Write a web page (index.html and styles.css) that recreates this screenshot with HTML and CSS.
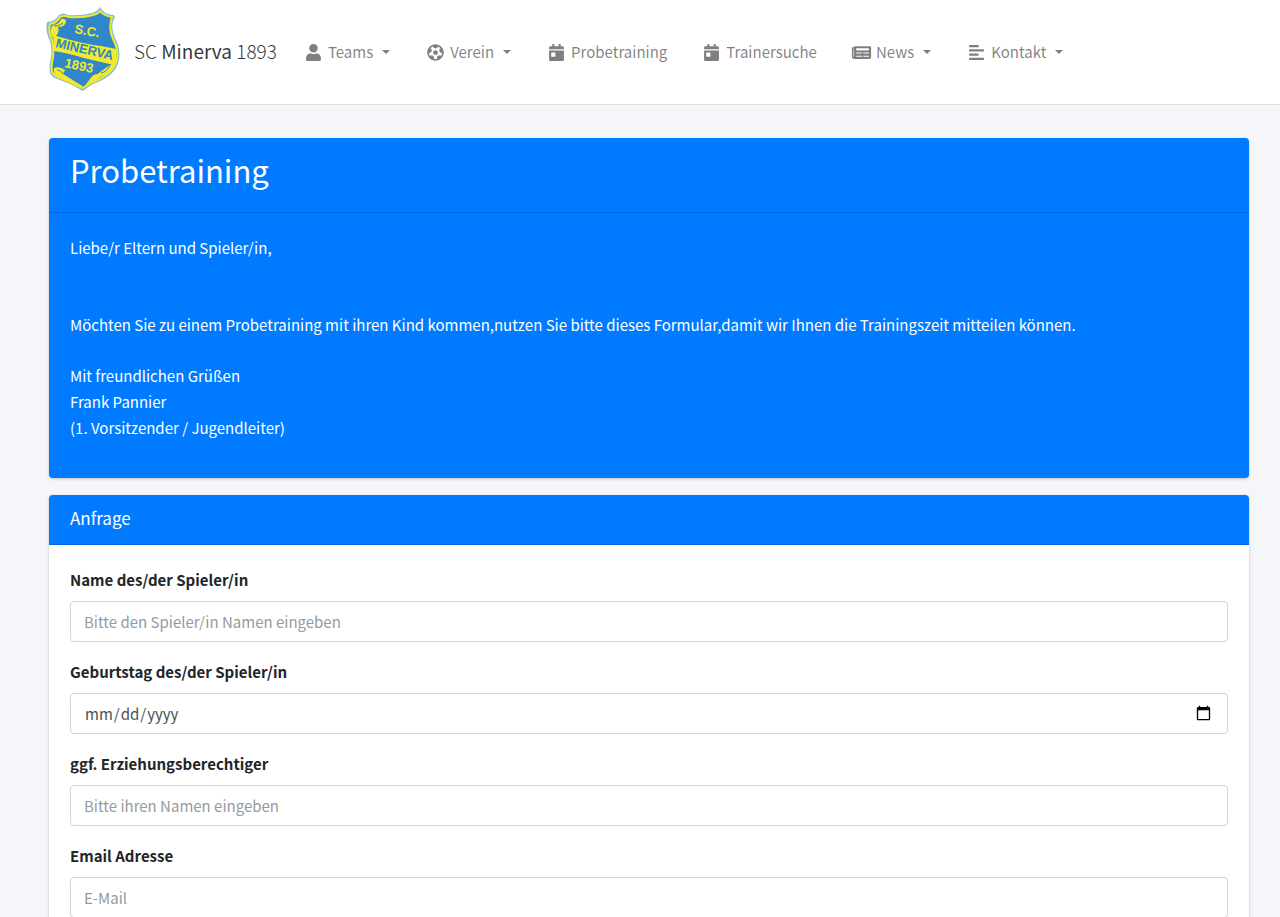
FILE: index.html
```html
<!DOCTYPE html>
<html lang="de">
<head>
    <meta charset="UTF-8">
    <meta name="viewport" content="width=device-width, initial-scale=1.0">
    <title>Probetraining - SC Minerva 1893</title>
    <link rel="stylesheet" href="styles.css">
</head>
<body>

    <!-- Navigation -->
    <header class="navbar">
        <a href="#" class="brand">
            <svg class="brand-logo" viewBox="0 0 76 86" aria-hidden="true">
                <path class="logo-edge" d="M1 16 Q9 16 13 9 Q17 6 22 9 Q35 10 46 7 Q52 5 54 1 Q57 8 67 9 Q70 10 68 13 Q64 21 69 32 Q75 43 73 54 Q70 68 54 75 Q44 79 37 85 Q30 81 24 78 L9 72 Q2 69 4 57 Q7 45 4 35 Q-1 25 1 16z"/>
                <path class="logo-line" d="M4 18 Q11 17 14 11 Q18 9 23 11 Q36 12 47 9 Q52 8 54 5 Q58 10 66 11 Q62 22 67 33 Q73 44 71 54 Q67 67 53 73 Q44 77 37 82 Q30 79 24 76 L10 70 Q4 67 6 57 Q9 45 6 34 Q2 25 4 18z"/>
                <path class="logo-band" d="M7 29 Q36 38 55 40 Q66 42 70 43 L71 54 L68 59 Q50 55 38 52 Q22 47 8 45z"/>
                <path class="logo-band" d="M6 31 Q3 22 7 19 Q14 18 15 13 Q20 12 20 16 Q19 21 12 21 Q14 26 9 31z"/>
                <path class="logo-curl" d="M8 20 Q13 21 17 17"/>
                <path class="logo-band" d="M8 62 Q14 60 19 64 L17 68 L38 81 L30 79 L12 70 Q7 69 8 62z"/>
                <path class="logo-band" d="M69 57 Q68 66 54 71 L38 81 L44 73 Q47 68 52 68 L54 66 L64 59z"/>
                <path class="logo-curl" d="M64 59 Q61 66 55 67"/>
                <path class="logo-curl" d="M11 64 Q15 64 17 68"/>
                <text class="logo-text" x="28" y="27" transform="rotate(10 28 27)">S.C.</text>
                <text class="logo-text logo-name" x="9" y="41" transform="rotate(13 9 41)">MINERVA</text>
                <text class="logo-text" x="18" y="61" transform="rotate(12 18 61)">1893</text>
            </svg>
            <span class="brand-text">SC <strong>Minerva</strong> 1893</span>
        </a>
        <nav class="nav">
            <a href="#" class="nav-link">
                <svg class="icon" viewBox="0 0 448 512" aria-hidden="true"><path d="M224 256c70.7 0 128-57.3 128-128S294.7 0 224 0 96 57.3 96 128s57.3 128 128 128zm89.6 32h-16.7c-22.2 10.2-46.9 16-72.9 16s-50.6-5.8-72.9-16h-16.7C60.2 288 0 348.2 0 422.4V464c0 26.5 21.5 48 48 48h352c26.5 0 48-21.5 48-48v-41.6c0-74.2-60.2-134.4-134.4-134.4z"/></svg>
                <span class="dropdown">Teams</span>
            </a>
            <a href="#" class="nav-link">
                <svg class="icon" viewBox="0 0 512 512" aria-hidden="true"><path d="M504 256c0 136.967-111.033 248-248 248S8 392.967 8 256 119.033 8 256 8s248 111.033 248 248zm-48 0l-.003-.282-26.064 22.741-62.679-58.5 16.454-84.355 34.303 3.072c-24.889-34.216-60.004-60.089-100.709-73.141l13.651 31.939L256 139l-74.953-41.525 13.651-31.939c-40.631 13.028-75.78 38.87-100.709 73.141l34.565-3.073 16.192 84.355-62.678 58.5-26.064-22.741-.003.282c0 43.015 13.497 83.952 38.472 117.991l7.704-33.897 85.138 10.447 36.301 77.826-29.902 17.786c40.202 13.122 84.29 13.148 124.572 0l-29.902-17.786 36.301-77.826 85.138-10.447 7.704 33.897C442.503 339.952 456 299.015 456 256zm-248.102 69.571l-29.894-91.312L256 177.732l77.996 56.527-29.622 91.312h-96.476z"/></svg>
                <span class="dropdown">Verein</span>
            </a>
            <a href="#" class="nav-link">
                <svg class="icon" viewBox="0 0 448 512" aria-hidden="true"><path d="M0 464c0 26.5 21.5 48 48 48h352c26.5 0 48-21.5 48-48V192H0v272zm64-192c0-8.8 7.2-16 16-16h96c8.8 0 16 7.2 16 16v96c0 8.8-7.2 16-16 16H80c-8.8 0-16-7.2-16-16v-96zM400 64h-48V16c0-8.8-7.2-16-16-16h-32c-8.8 0-16 7.2-16 16v48H160V16c0-8.8-7.2-16-16-16h-32c-8.8 0-16 7.2-16 16v48H48C21.5 64 0 85.5 0 112v48h448v-48c0-26.5-21.5-48-48-48z"/></svg>
                <span>Probetraining</span>
            </a>
            <a href="#" class="nav-link">
                <svg class="icon" viewBox="0 0 448 512" aria-hidden="true"><path d="M0 464c0 26.5 21.5 48 48 48h352c26.5 0 48-21.5 48-48V192H0v272zm64-192c0-8.8 7.2-16 16-16h96c8.8 0 16 7.2 16 16v96c0 8.8-7.2 16-16 16H80c-8.8 0-16-7.2-16-16v-96zM400 64h-48V16c0-8.8-7.2-16-16-16h-32c-8.8 0-16 7.2-16 16v48H160V16c0-8.8-7.2-16-16-16h-32c-8.8 0-16 7.2-16 16v48H48C21.5 64 0 85.5 0 112v48h448v-48c0-26.5-21.5-48-48-48z"/></svg>
                <span>Trainersuche</span>
            </a>
            <a href="#" class="nav-link">
                <svg class="icon" viewBox="0 0 576 512" aria-hidden="true"><path d="M552 64H88c-13.255 0-24 10.745-24 24v8H24c-13.255 0-24 10.745-24 24v272c0 30.928 25.072 56 56 56h472c26.51 0 48-21.49 48-48V88c0-13.255-10.745-24-24-24zM56 400a8 8 0 0 1-8-8V144h16v248a8 8 0 0 1-8 8zm236-16H140c-6.627 0-12-5.373-12-12v-8c0-6.627 5.373-12 12-12h152c6.627 0 12 5.373 12 12v8c0 6.627-5.373 12-12 12zm208 0H348c-6.627 0-12-5.373-12-12v-8c0-6.627 5.373-12 12-12h152c6.627 0 12 5.373 12 12v8c0 6.627-5.373 12-12 12zm-208-96H140c-6.627 0-12-5.373-12-12v-8c0-6.627 5.373-12 12-12h152c6.627 0 12 5.373 12 12v8c0 6.627-5.373 12-12 12zm208 0H348c-6.627 0-12-5.373-12-12v-8c0-6.627 5.373-12 12-12h152c6.627 0 12 5.373 12 12v8c0 6.627-5.373 12-12 12zm0-96H140c-6.627 0-12-5.373-12-12v-40c0-6.627 5.373-12 12-12h360c6.627 0 12 5.373 12 12v40c0 6.627-5.373 12-12 12z"/></svg>
                <span class="dropdown">News</span>
            </a>
            <a href="#" class="nav-link">
                <svg class="icon" viewBox="0 0 448 512" aria-hidden="true"><path d="M12 32h264q12 0 12 12v40q0 12-12 12H12Q0 96 0 84V44q0-12 12-12zM16 160h416q16 0 16 16v32q0 16-16 16H16q-16 0-16-16v-32q0-16 16-16zM12 288h264q12 0 12 12v40q0 12-12 12H12q-12 0-12-12v-40q0-12 12-12zM16 416h416q16 0 16 16v32q0 16-16 16H16q-16 0-16-16v-32q0-16 16-16z"/></svg>
                <span class="dropdown">Kontakt</span>
            </a>
        </nav>
    </header>

    <main class="content">
        <!-- Begrüßung -->
        <section class="card card-primary">
            <div class="card-header">
                <h1>Probetraining</h1>
            </div>
            <div class="card-body">
                <p>Liebe/r Eltern und Spieler/in,<br>&nbsp;</p>
                <p>Möchten Sie zu einem Probetraining mit ihren Kind kommen,nutzen Sie bitte dieses Formular,damit wir Ihnen die Trainingszeit mitteilen können.</p>
                <p>Mit freundlichen Grüßen<br>
                Frank Pannier<br>
                (1. Vorsitzender / Jugendleiter)</p>
            </div>
        </section>

        <!-- Formular -->
        <section class="card">
            <div class="card-header form-header">
                <h2>Anfrage</h2>
            </div>
            <form class="card-body" action="#" method="post">
                <div class="form-group">
                    <label for="player">Name des/der Spieler/in</label>
                    <input type="text" id="player" name="player" class="form-control" placeholder="Bitte den Spieler/in Namen eingeben">
                </div>
                <div class="form-group">
                    <label for="birthday">Geburtstag des/der Spieler/in</label>
                    <input type="date" id="birthday" name="birthday" class="form-control">
                </div>
                <div class="form-group">
                    <label for="parent">ggf. Erziehungsberechtiger</label>
                    <input type="text" id="parent" name="parent" class="form-control" placeholder="Bitte ihren Namen eingeben">
                </div>
                <div class="form-group">
                    <label for="email">Email Adresse</label>
                    <input type="email" id="email" name="email" class="form-control" placeholder="E-Mail">
                </div>
            </form>
        </section>
    </main>

</body>
</html>
```
FILE: styles.css
```css
* {
    box-sizing: border-box;
}

body {
    font-family: "Source Sans Pro", "Noto Sans CJK SC", sans-serif;
    font-size: 15px;
    line-height: 26px;
    color: #212529;
    background-color: #f4f6f9;
    margin: 0;
}

h1, h2, p {
    margin: 0;
    font-weight: 400;
}

/* Navigation */
.navbar {
    display: flex;
    align-items: center;
    gap: 26px;
    padding: 6px 31px 6px 46px;
    background-color: #fff;
    border-bottom: 1px solid #dee2e6;
}

.brand {
    display: flex;
    align-items: center;
    gap: 12px;
    padding-bottom: 6px;
    color: rgba(0, 0, 0, 0.8);
    text-decoration: none;
}

.brand-logo {
    width: 76px;
    height: 86px;
}

.logo-edge {
    fill: #7fb9dc;
}

.logo-line {
    fill: #2f86c8;
    stroke: #f2ea2c;
    stroke-width: 2;
}

.logo-band {
    fill: #f2ea2c;
}

.logo-curl {
    fill: none;
    stroke: #2f86c8;
    stroke-width: 1;
}

.logo-text {
    font-family: "Liberation Sans", Arial, sans-serif;
    font-size: 13px;
    font-weight: 700;
    fill: #f2ea2c;
}

.logo-name {
    fill: #2f86c8;
}

.brand-text {
    padding-top: 3px;
    font-size: 19px;
    font-weight: 300;
    white-space: nowrap;
}

.brand-text strong {
    font-weight: 400;
}

.nav {
    display: flex;
    gap: 34px;
}

.nav-link {
    display: flex;
    align-items: center;
    gap: 4px;
    color: rgba(0, 0, 0, 0.5);
    text-decoration: none;
    white-space: nowrap;
}

.icon {
    width: 21px;
    height: 17px;
    fill: currentColor;
}

.dropdown::after {
    content: "";
    display: inline-block;
    margin: 0 1px 0 9px;
    vertical-align: 4px;
    border-top: 4px solid;
    border-left: 4px solid transparent;
    border-right: 4px solid transparent;
}

/* Inhalt */
.content {
    padding: 33px 31px 17px 49px;
}

.card {
    margin-bottom: 17px;
    background-color: #fff;
    border-radius: 4px;
    box-shadow: 0 0 1px rgba(0, 0, 0, 0.13), 0 1px 3px rgba(0, 0, 0, 0.2);
}

.card-header {
    padding: 13px 21px;
    border-bottom: 1px solid rgba(0, 0, 0, 0.13);
}

.card-header h1 {
    margin-bottom: 10px;
    font-size: 31px;
    line-height: 38px;
}

.card-header h2 {
    font-size: 17px;
    line-height: 23px;
}

.card-body {
    padding: 22px 21px 12px;
}

.card-body p {
    margin-bottom: 25px;
}

.card-primary,
.form-header {
    color: #fff;
    background-color: #007bff;
}

.form-header {
    padding: 11px 21px 15px;
    border-radius: 4px 4px 0 0;
}

/* Formular */
.form-group {
    margin-bottom: 17px;
}

.form-group label {
    display: block;
    margin-bottom: 8px;
    font-weight: 700;
}

.form-control {
    display: block;
    width: 100%;
    height: 41px;
    padding: 5px 13px 6px;
    font-family: inherit;
    font-size: 15px;
    color: #495057;
    background-color: #fff;
    border: 1px solid #ced4da;
    border-radius: 4px;
}

.form-control::placeholder {
    color: #939ba2;
}

.form-control::-webkit-calendar-picker-indicator {
    width: 17px;
    height: 17px;
}
```
